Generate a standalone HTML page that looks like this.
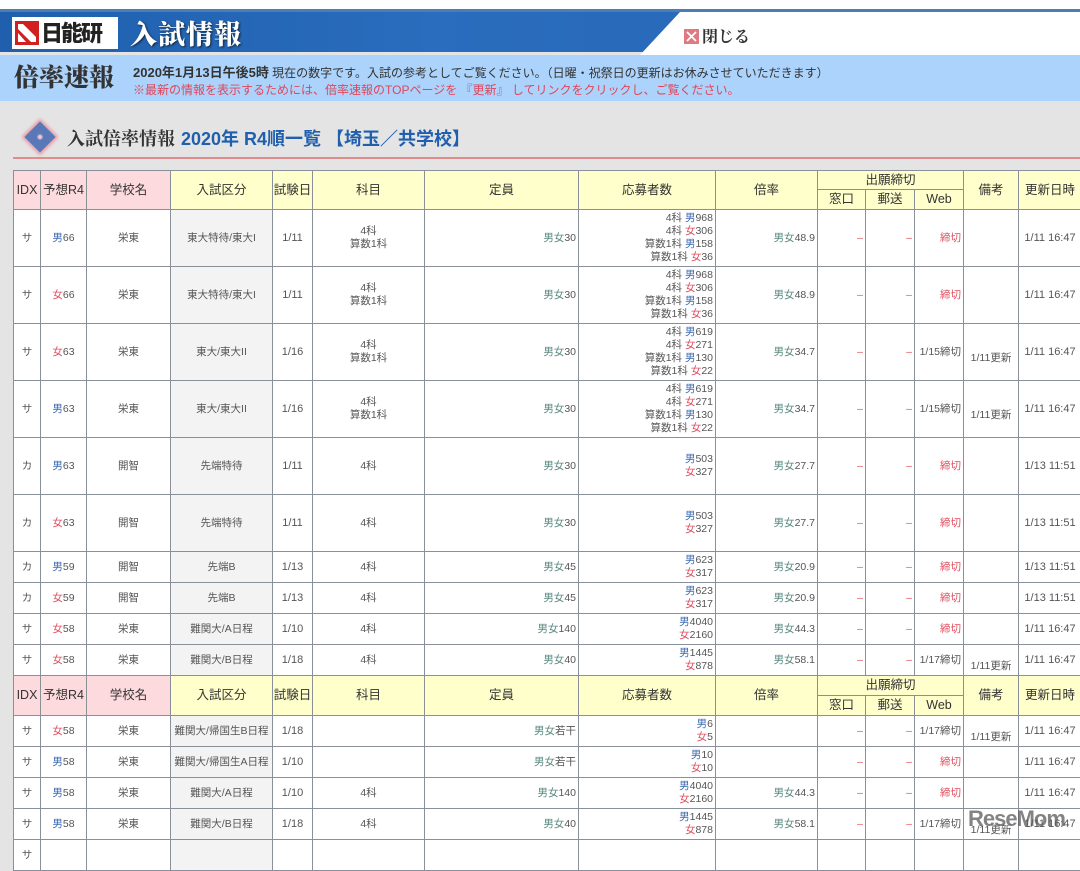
<!DOCTYPE html>
<html><head><meta charset="utf-8">
<style>
*{margin:0;padding:0;box-sizing:border-box}
body{width:1080px;height:842px;overflow:hidden;background:#e4e4e4;font-family:"Liberation Sans","Noto Sans CJK JP",sans-serif;position:relative}
.top{position:absolute;left:0;top:0;width:1080px;height:9px;background:#fff}
.ban{position:absolute;left:0;top:9px;width:1080px;height:43px;background:linear-gradient(90deg,#1f5fae,#2a6cbd 40%,#2766b5);border-top:3px solid #4b7db6}
.ban .white{position:absolute;left:640px;top:0;width:440px;height:43px;background:#fff;clip-path:polygon(40px 0,100% 0,100% 100%,0 100%)}
.logo{position:absolute;left:12px;top:5px;width:106px;height:32px;background:#fff;border:2px solid #fff}
.logo svg{position:absolute;left:1px;top:2px}
.logo .t{position:absolute;left:27px;top:-3px;font:900 22px "Noto Sans CJK JP",sans-serif;color:#222;letter-spacing:-2px}
.btitle{position:absolute;left:130px;top:1px;font:900 27px "Noto Serif CJK SC",serif;color:#fff;letter-spacing:1px;text-shadow:1px 1px 2px #123}
.close{position:absolute;left:684px;top:24px;font:bold 16px "Noto Serif CJK SC",serif;color:#333}
.close svg{vertical-align:-2px;margin-right:3px}
.strip{position:absolute;left:0;top:55px;width:1080px;height:46px;background:#acd3fb}
.bs{position:absolute;left:14px;top:3px;font:900 25px "Noto Serif CJK SC",serif;color:#333}
.l1{position:absolute;left:133px;top:7px;font-size:12px;color:#333}
.l1 b{font-size:13px}
.l2{position:absolute;left:133px;top:26px;font-size:12px;color:#e0455a}
.h2{position:absolute;left:67px;top:125px;font:bold 18px "Noto Serif CJK SC",serif;color:#333}
.h2 span{font:bold 18px "Liberation Sans","Noto Sans CJK JP",sans-serif;color:#1f5fae;margin-left:6px}
.dia{position:absolute;left:29px;top:126px;width:22px;height:22px;background:#5a78b8;transform:rotate(45deg);box-shadow:0 0 3px 2px #e89aa6}
.dia:after{content:"";position:absolute;left:5px;top:5px;width:12px;height:12px;background:radial-gradient(#f6c5d0 15%,transparent 40%)}
.rl{position:absolute;left:13px;top:157px;width:1067px;height:2px;background:#e08c8c}
table{position:absolute;left:13px;top:170px;border-collapse:collapse;table-layout:fixed;width:1068px;background:#fff}
td,th{border:1px solid #8a9099;font-size:10.5px;color:#555;text-align:center;font-weight:normal;line-height:13px;overflow:hidden;white-space:nowrap}
th{font-size:12.5px;color:#333;background:#ffffcc}
th.p{background:#fcdadd}
td.g{background:#f3f3f3}
td.r{text-align:right;padding-right:2px}
td.d{font-size:11px}
.m{color:#3d6bb3}.f{color:#e05060}.mf{color:#5a8a80}.x{color:#e05060}
td.bk{vertical-align:bottom;padding-bottom:2px}
</style></head><body>
<div class="top"></div>
<div class="ban"><div class="white"></div>
<div class="logo"><svg width="24" height="24" viewBox="0 0 24 24"><rect width="24" height="24" fill="#d02020"/><path d="M3 3h5l13 13v5h-5L3 8z" fill="#fff"/><path d="M3 12v9h8z" fill="#fff"/></svg><div class="t">日能研</div></div>
<div class="btitle">入試情報</div></div>
<div class="close"><svg width="15" height="15" viewBox="0 0 15 15"><rect width="15" height="15" fill="#e07a80"/><path d="M3 3l9 9M12 3l-9 9" stroke="#fff" stroke-width="1.8"/></svg>閉じる</div>
<div class="strip"><div class="bs">倍率速報</div>
<div class="l1"><b>2020年1月13日午後5時</b> 現在の数字です。入試の参考としてご覧ください。（日曜・祝祭日の更新はお休みさせていただきます）</div>
<div class="l2">※最新の情報を表示するためには、倍率速報のTOPページを 『更新』 してリンクをクリックし、ご覧ください。</div></div>
<div class="dia"></div>
<div class="h2">入試倍率情報<span>2020年 R4順一覧 【埼玉／共学校】</span></div>
<div class="rl"></div>
<table>
<colgroup><col style="width:27px"><col style="width:46px"><col style="width:84px"><col style="width:102px"><col style="width:40px"><col style="width:112px"><col style="width:154px"><col style="width:137px"><col style="width:102px"><col style="width:48px"><col style="width:49px"><col style="width:49px"><col style="width:55px"><col style="width:63px"></colgroup>
<tr style="height:19px"><th class="p" rowspan="2">IDX</th><th class="p" rowspan="2">予想R4</th><th class="p" rowspan="2">学校名</th><th rowspan="2">入試区分</th><th rowspan="2">試験日</th><th rowspan="2">科目</th><th rowspan="2">定員</th><th rowspan="2">応募者数</th><th rowspan="2">倍率</th><th colspan="3">出願締切</th><th rowspan="2">備考</th><th rowspan="2">更新日時</th></tr>
<tr style="height:20px"><th>窓口</th><th>郵送</th><th>Web</th></tr>

<tr style="height:57px"><td>サ</td><td><span class="m">男</span>66</td><td>栄東</td><td class="g">東大特待/東大I</td><td class="d">1/11</td><td>4科<br>算数1科</td><td class="r"><span class="mf">男女</span>30</td><td class="r">4科 <span class="m">男</span>968<br>4科 <span class="f">女</span>306<br>算数1科 <span class="m">男</span>158<br>算数1科 <span class="f">女</span>36</td><td class="r"><span class="mf">男女</span>48.9</td><td class="r x">–</td><td class="r x">–</td><td class="r x">締切</td><td></td><td class="d">1/11 16:47</td></tr>
<tr style="height:57px"><td>サ</td><td><span class="f">女</span>66</td><td>栄東</td><td class="g">東大特待/東大I</td><td class="d">1/11</td><td>4科<br>算数1科</td><td class="r"><span class="mf">男女</span>30</td><td class="r">4科 <span class="m">男</span>968<br>4科 <span class="f">女</span>306<br>算数1科 <span class="m">男</span>158<br>算数1科 <span class="f">女</span>36</td><td class="r"><span class="mf">男女</span>48.9</td><td class="r x">–</td><td class="r x">–</td><td class="r x">締切</td><td></td><td class="d">1/11 16:47</td></tr>
<tr style="height:57px"><td>サ</td><td><span class="f">女</span>63</td><td>栄東</td><td class="g">東大/東大II</td><td class="d">1/16</td><td>4科<br>算数1科</td><td class="r"><span class="mf">男女</span>30</td><td class="r">4科 <span class="m">男</span>619<br>4科 <span class="f">女</span>271<br>算数1科 <span class="m">男</span>130<br>算数1科 <span class="f">女</span>22</td><td class="r"><span class="mf">男女</span>34.7</td><td class="r x">–</td><td class="r x">–</td><td class="r">1/15締切</td><td style="padding-top:12px">1/11更新</td><td class="d">1/11 16:47</td></tr>
<tr style="height:57px"><td>サ</td><td><span class="m">男</span>63</td><td>栄東</td><td class="g">東大/東大II</td><td class="d">1/16</td><td>4科<br>算数1科</td><td class="r"><span class="mf">男女</span>30</td><td class="r">4科 <span class="m">男</span>619<br>4科 <span class="f">女</span>271<br>算数1科 <span class="m">男</span>130<br>算数1科 <span class="f">女</span>22</td><td class="r"><span class="mf">男女</span>34.7</td><td class="r x">–</td><td class="r x">–</td><td class="r">1/15締切</td><td style="padding-top:12px">1/11更新</td><td class="d">1/11 16:47</td></tr>
<tr style="height:57px"><td>カ</td><td><span class="m">男</span>63</td><td>開智</td><td class="g">先端特待</td><td class="d">1/11</td><td>4科</td><td class="r"><span class="mf">男女</span>30</td><td class="r"><span class="m">男</span>503<br><span class="f">女</span>327</td><td class="r"><span class="mf">男女</span>27.7</td><td class="r x">–</td><td class="r x">–</td><td class="r x">締切</td><td></td><td class="d">1/13 11:51</td></tr>
<tr style="height:57px"><td>カ</td><td><span class="f">女</span>63</td><td>開智</td><td class="g">先端特待</td><td class="d">1/11</td><td>4科</td><td class="r"><span class="mf">男女</span>30</td><td class="r"><span class="m">男</span>503<br><span class="f">女</span>327</td><td class="r"><span class="mf">男女</span>27.7</td><td class="r x">–</td><td class="r x">–</td><td class="r x">締切</td><td></td><td class="d">1/13 11:51</td></tr>
<tr style="height:31px"><td>カ</td><td><span class="m">男</span>59</td><td>開智</td><td class="g">先端B</td><td class="d">1/13</td><td>4科</td><td class="r"><span class="mf">男女</span>45</td><td class="r"><span class="m">男</span>623<br><span class="f">女</span>317</td><td class="r"><span class="mf">男女</span>20.9</td><td class="r x">–</td><td class="r x">–</td><td class="r x">締切</td><td></td><td class="d">1/13 11:51</td></tr>
<tr style="height:31px"><td>カ</td><td><span class="f">女</span>59</td><td>開智</td><td class="g">先端B</td><td class="d">1/13</td><td>4科</td><td class="r"><span class="mf">男女</span>45</td><td class="r"><span class="m">男</span>623<br><span class="f">女</span>317</td><td class="r"><span class="mf">男女</span>20.9</td><td class="r x">–</td><td class="r x">–</td><td class="r x">締切</td><td></td><td class="d">1/13 11:51</td></tr>
<tr style="height:31px"><td>サ</td><td><span class="f">女</span>58</td><td>栄東</td><td class="g">難関大/A日程</td><td class="d">1/10</td><td>4科</td><td class="r"><span class="mf">男女</span>140</td><td class="r"><span class="m">男</span>4040<br><span class="f">女</span>2160</td><td class="r"><span class="mf">男女</span>44.3</td><td class="r x">–</td><td class="r x">–</td><td class="r x">締切</td><td></td><td class="d">1/11 16:47</td></tr>
<tr style="height:31px"><td>サ</td><td><span class="f">女</span>58</td><td>栄東</td><td class="g">難関大/B日程</td><td class="d">1/18</td><td>4科</td><td class="r"><span class="mf">男女</span>40</td><td class="r"><span class="m">男</span>1445<br><span class="f">女</span>878</td><td class="r"><span class="mf">男女</span>58.1</td><td class="r x">–</td><td class="r x">–</td><td class="r">1/17締切</td><td class="bk">1/11更新</td><td class="d">1/11 16:47</td></tr>

<tr style="height:20px"><th class="p" rowspan="2">IDX</th><th class="p" rowspan="2">予想R4</th><th class="p" rowspan="2">学校名</th><th rowspan="2">入試区分</th><th rowspan="2">試験日</th><th rowspan="2">科目</th><th rowspan="2">定員</th><th rowspan="2">応募者数</th><th rowspan="2">倍率</th><th colspan="3">出願締切</th><th rowspan="2">備考</th><th rowspan="2">更新日時</th></tr>
<tr style="height:20px"><th>窓口</th><th>郵送</th><th>Web</th></tr>

<tr style="height:31px"><td>サ</td><td><span class="f">女</span>58</td><td>栄東</td><td class="g">難関大/帰国生B日程</td><td class="d">1/18</td><td></td><td class="r"><span class="mf">男女</span>若干</td><td class="r"><span class="m">男</span>6<br><span class="f">女</span>5</td><td></td><td class="r x">–</td><td class="r x">–</td><td class="r">1/17締切</td><td class="bk">1/11更新</td><td class="d">1/11 16:47</td></tr>
<tr style="height:31px"><td>サ</td><td><span class="m">男</span>58</td><td>栄東</td><td class="g">難関大/帰国生A日程</td><td class="d">1/10</td><td></td><td class="r"><span class="mf">男女</span>若干</td><td class="r"><span class="m">男</span>10<br><span class="f">女</span>10</td><td></td><td class="r x">–</td><td class="r x">–</td><td class="r x">締切</td><td></td><td class="d">1/11 16:47</td></tr>
<tr style="height:31px"><td>サ</td><td><span class="m">男</span>58</td><td>栄東</td><td class="g">難関大/A日程</td><td class="d">1/10</td><td>4科</td><td class="r"><span class="mf">男女</span>140</td><td class="r"><span class="m">男</span>4040<br><span class="f">女</span>2160</td><td class="r"><span class="mf">男女</span>44.3</td><td class="r x">–</td><td class="r x">–</td><td class="r x">締切</td><td></td><td class="d">1/11 16:47</td></tr>
<tr style="height:31px"><td>サ</td><td><span class="m">男</span>58</td><td>栄東</td><td class="g">難関大/B日程</td><td class="d">1/18</td><td>4科</td><td class="r"><span class="mf">男女</span>40</td><td class="r"><span class="m">男</span>1445<br><span class="f">女</span>878</td><td class="r"><span class="mf">男女</span>58.1</td><td class="r x">–</td><td class="r x">–</td><td class="r">1/17締切</td><td class="bk">1/11更新</td><td class="d">1/11 16:47</td></tr>
<tr style="height:31px"><td>サ</td><td></td><td></td><td class="g"></td><td></td><td></td><td></td><td></td><td></td><td></td><td></td><td></td><td></td><td></td></tr>
</table>
<div style="position:absolute;left:968px;top:806px;font:bold 22px 'Liberation Sans',sans-serif;color:rgba(90,90,90,.75);letter-spacing:-1px">ReseMom</div>
</body></html>
